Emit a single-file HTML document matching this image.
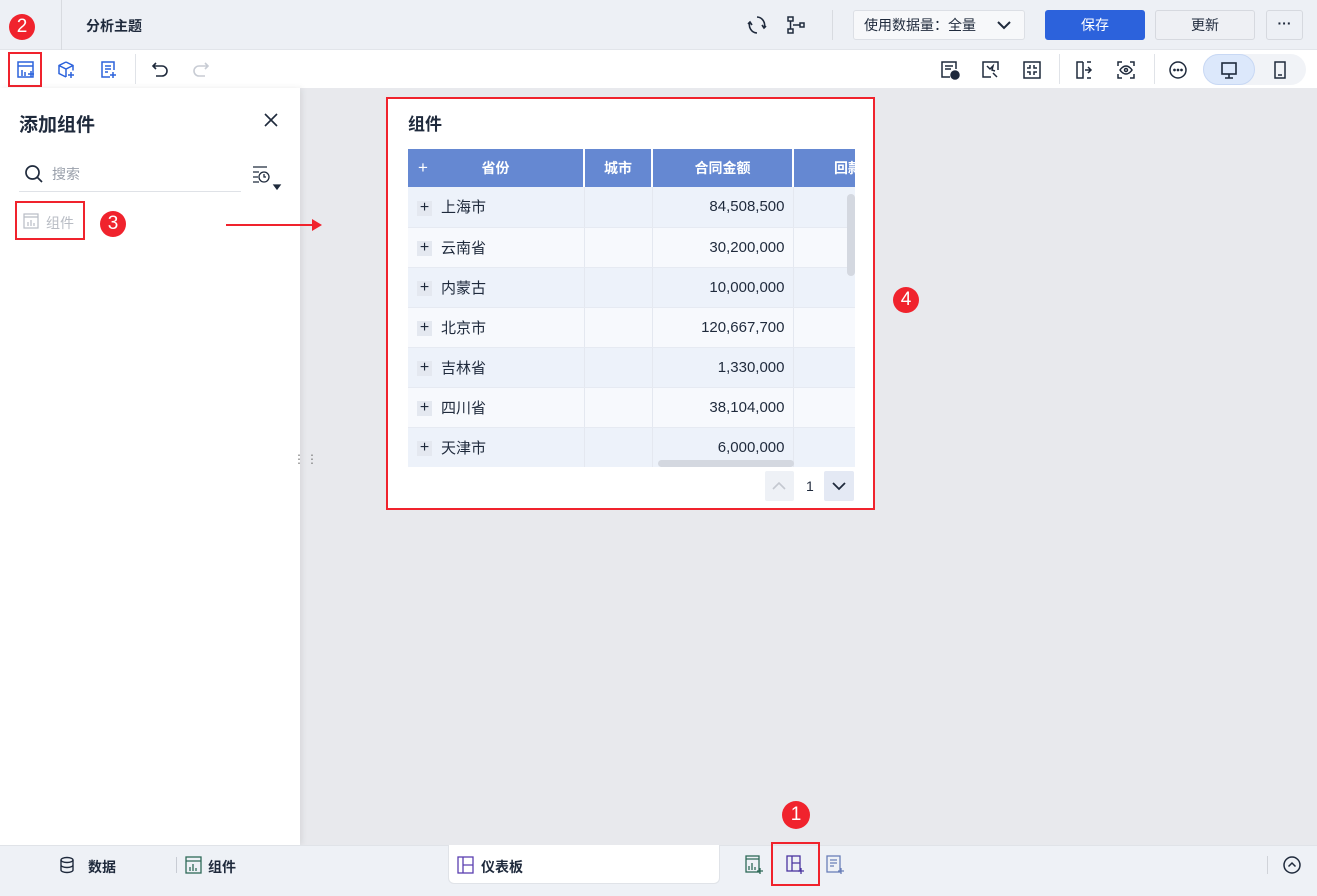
<!DOCTYPE html>
<html><head><meta charset="utf-8"><style>
*{box-sizing:border-box;margin:0;padding:0}
body{width:1317px;height:896px;overflow:hidden;background:#fff;font-family:"Liberation Sans","Noto Sans CJK SC",sans-serif;color:#1f2a3c;position:relative}
.abs{position:absolute}
.top{left:0;top:0;width:1317px;height:50px;background:#edf0f5;border-bottom:1px solid #e2e5ea}
.tb{left:0;top:50px;width:1317px;height:38px;background:#fff}
.canvas{left:300px;top:88px;width:1017px;height:757px;background:#e8e9ed}
.left{left:0;top:88px;width:300px;height:757px;background:#fff;box-shadow:2px 0 6px rgba(0,0,0,.08)}
.bottom{left:0;top:845px;width:1317px;height:51px;background:#eef1f6;border-top:1px solid #e0e3e8}
.badge{width:26px;height:26px;border-radius:50%;background:#f0232d;color:#fff;font-size:19px;text-align:center;line-height:26px}
.red{border:2px solid #f0232d}
.btn{font-size:14px;text-align:center;border-radius:3px}
table{border-collapse:collapse;font-size:15px}
td{height:40px;border-right:1px solid #e4e8f0;border-bottom:1px solid #e6eaf2}
th{height:38px;background:#6588d2;color:#fff;font-size:14px;border-right:2px solid #fff}
.pl{display:inline-block;width:15px;height:15px;background:#e4e8f0;line-height:14px;text-align:center;font-size:16px;margin:0 9px 0 9px;vertical-align:middle}
</style></head><body>
<div class="abs top"></div>
<div class="abs" style="left:61px;top:0;width:1px;height:50px;background:#d8dbe0"></div>
<div class="abs" style="left:86px;top:16px;font-size:14px;font-weight:bold">分析主题</div>
<svg class="abs" style="left:747px;top:15px" width="20" height="20" viewBox="0 0 20 20" fill="none" stroke="#1f2a3c" stroke-width="1.6"><path d="M10 2a8 8 0 0 1 7 11M10 18a8 8 0 0 1-7-11"/><path d="M15 10l2 3 2-2M5 10l-2-3-2 2"/></svg>
<svg class="abs" style="left:786px;top:15px" width="20" height="20" viewBox="0 0 20 20" fill="none" stroke="#1f2a3c" stroke-width="1.5"><rect x="2" y="2" width="5" height="4"/><rect x="2" y="14" width="5" height="4"/><rect x="14" y="8" width="4" height="4"/><path d="M4.5 6v8M7 10h7"/></svg>
<div class="abs" style="left:832px;top:10px;width:1px;height:30px;background:#d8dbe0"></div>
<div class="abs btn" style="left:853px;top:10px;width:172px;height:30px;background:#f7f8fa;border:1px solid #dcdfe5;line-height:28px;text-align:left;padding-left:10px;color:#1f2a3c">使用数据量：全量<svg style="position:absolute;right:12px;top:8px" width="16" height="12" viewBox="0 0 16 12"><path d="M2 3l6 6 6-6" fill="none" stroke="#1f2a3c" stroke-width="2"/></svg></div>
<div class="abs btn" style="left:1045px;top:10px;width:100px;height:30px;background:#2c62dc;color:#fff;line-height:30px">保存</div>
<div class="abs btn" style="left:1155px;top:10px;width:100px;height:30px;background:#eef0f4;border:1px solid #d6d9df;line-height:28px">更新</div>
<div class="abs btn" style="left:1266px;top:10px;width:37px;height:30px;border:1px solid #d6d9df;line-height:24px;font-weight:bold">···</div>

<div class="abs tb"></div>
<div class="abs red" style="left:8px;top:52px;width:34px;height:35px"></div>
<svg class="abs" style="left:17px;top:61px" width="18" height="18" viewBox="0 0 18 18" fill="none" stroke="#2c62dc" stroke-width="1.5"><rect x="1" y="1" width="15" height="15"/><path d="M1 5h15M5 9v6M8 11v4M11 13h6M14 10v6"/></svg>
<svg class="abs" style="left:58px;top:61px" width="18" height="18" viewBox="0 0 18 18" fill="none" stroke="#2c62dc" stroke-width="1.5"><path d="M8 1l7 3.5v5M8 1L1 4.5v8L8 16M1 4.5L8 8l7-3.5M8 8v8"/><path d="M13 11v6M10 14h6"/></svg>
<svg class="abs" style="left:100px;top:61px" width="18" height="18" viewBox="0 0 18 18" fill="none" stroke="#2c62dc" stroke-width="1.5"><path d="M10 16H2V1h12v8M5 5h6M5 8h6M5 11h3M13 11v6M10 14h6"/></svg>
<div class="abs" style="left:135px;top:54px;width:1px;height:30px;background:#e0e3e8"></div>
<svg class="abs" style="left:151px;top:61px" width="18" height="18" viewBox="0 0 18 18" fill="none" stroke="#1f2a3c" stroke-width="1.6"><path d="M5 2L2 5l3 3M2 5h9a5 5 0 0 1 0 10H5"/></svg>
<svg class="abs" style="left:192px;top:61px" width="18" height="18" viewBox="0 0 18 18" fill="none" stroke="#c8ccd4" stroke-width="1.6"><path d="M13 2l3 3-3 3M16 5H7a5 5 0 0 0 0 10h6"/></svg>
<svg class="abs" style="left:940px;top:60px" width="20" height="20" viewBox="0 0 20 20" fill="none" stroke="#1f2a3c" stroke-width="1.5"><path d="M10 17H2V2h14v7M5 6h8M5 9h6"/><circle cx="15" cy="15" r="4" fill="#1f2a3c"/></svg>
<svg class="abs" style="left:981px;top:60px" width="20" height="20" viewBox="0 0 20 20" fill="none" stroke="#1f2a3c" stroke-width="1.5"><path d="M10 17H2V2h15v8"/><path d="M6 6l3 3 3-3-1 4 3 1M12 13l4 4"/></svg>
<svg class="abs" style="left:1022px;top:60px" width="20" height="20" viewBox="0 0 20 20" fill="none" stroke="#1f2a3c" stroke-width="1.5"><rect x="2" y="2" width="16" height="16"/><path d="M8 5v3H5M12 5v3h3M8 15v-3H5M12 15v-3h3"/></svg>
<div class="abs" style="left:1059px;top:54px;width:1px;height:30px;background:#e0e3e8"></div>
<svg class="abs" style="left:1075px;top:60px" width="20" height="20" viewBox="0 0 20 20" fill="none" stroke="#1f2a3c" stroke-width="1.5"><path d="M8 2H2v16h6V2M12 2h4M12 18h4M13 7l3 3-3 3M10 10h6"/></svg>
<svg class="abs" style="left:1116px;top:60px" width="20" height="20" viewBox="0 0 20 20" fill="none" stroke="#1f2a3c" stroke-width="1.5"><path d="M2 6V2h4M14 2h4v4M2 14v4h4M18 14v4h-4"/><path d="M4 10s2.5-4 6-4 6 4 6 4-2.5 4-6 4-6-4-6-4z"/><circle cx="10" cy="10" r="1.5"/></svg>
<div class="abs" style="left:1154px;top:54px;width:1px;height:30px;background:#e0e3e8"></div>
<svg class="abs" style="left:1168px;top:60px" width="20" height="20" viewBox="0 0 20 20" fill="none" stroke="#1f2a3c" stroke-width="1.5"><circle cx="10" cy="10" r="8"/><circle cx="6.5" cy="10" r=".6" fill="#1f2a3c"/><circle cx="10" cy="10" r=".6" fill="#1f2a3c"/><circle cx="13.5" cy="10" r=".6" fill="#1f2a3c"/></svg>
<div class="abs" style="left:1203px;top:54px;width:103px;height:31px;border-radius:16px;background:#f1f3f7"></div>
<div class="abs" style="left:1203px;top:54px;width:52px;height:31px;border-radius:16px;background:#dce8fb;border:1px solid #c8d8f4"></div>
<svg class="abs" style="left:1219px;top:60px" width="20" height="20" viewBox="0 0 20 20" fill="none" stroke="#1f2a3c" stroke-width="1.6"><rect x="3" y="3" width="14" height="11"/><path d="M10 14v4M6 18h8"/></svg>
<svg class="abs" style="left:1270px;top:60px" width="20" height="20" viewBox="0 0 20 20" fill="none" stroke="#1f2a3c" stroke-width="1.5"><rect x="5" y="2" width="10" height="16"/><path d="M8 15h4"/></svg>

<div class="abs canvas"></div>
<div class="abs left"></div>
<div class="abs badge" style="left:9px;top:14px">2</div>
<div class="abs" style="left:19px;top:110px;font-size:19px;font-weight:bold">添加组件</div>
<svg class="abs" style="left:263px;top:112px" width="16" height="16" viewBox="0 0 16 16" stroke="#1f2a3c" stroke-width="1.6"><path d="M2 2l12 12M14 2L2 14"/></svg>
<svg class="abs" style="left:24px;top:164px" width="20" height="20" viewBox="0 0 20 20" fill="none" stroke="#1f2a3c" stroke-width="1.7"><circle cx="8.5" cy="8.5" r="6.5"/><path d="M13 13l5 5"/></svg>
<div class="abs" style="left:52px;top:164px;font-size:14px;color:#9aa0ab">搜索</div>
<div class="abs" style="left:19px;top:191px;width:222px;height:1px;background:#dfe2e7"></div>
<svg class="abs" style="left:252px;top:164px" width="30" height="28" viewBox="0 0 30 28" fill="none" stroke="#1f2a3c" stroke-width="1.3"><path d="M1 3h14M1 8h6M1 13h5M1 18h6"/><circle cx="12" cy="13" r="5"/><path d="M12 10v3h2"/><path d="M22 21l3 4 3-4z" fill="#1f2a3c"/></svg>
<div class="abs red" style="left:15px;top:201px;width:70px;height:39px"></div>
<svg class="abs" style="left:23px;top:213px" width="16" height="16" viewBox="0 0 16 16" fill="none" stroke="#b8bcc4" stroke-width="1.2"><rect x="1" y="1" width="14" height="14"/><path d="M1 4h14M5 13V9M8 13V7M11 13v-3"/></svg>
<div class="abs" style="left:46px;top:213px;font-size:14px;color:#b8bcc4">组件</div>
<div class="abs badge" style="left:100px;top:211px">3</div>
<div class="abs" style="left:226px;top:224px;width:88px;height:2px;background:#f0232d"></div>
<svg class="abs" style="left:312px;top:219px" width="10" height="12"><path d="M0 0l10 6-10 6z" fill="#f0232d"/></svg>
<div class="abs" style="left:293px;top:456px;font-size:12px;color:#777;line-height:6px;letter-spacing:1px">⋮⋮</div>

<div class="abs red" style="left:386px;top:97px;width:489px;height:413px;background:#fff"></div>
<div class="abs" style="left:408px;top:110px;font-size:17px;font-weight:bold">组件</div>
<div class="abs" style="left:408px;top:149px;width:447px;height:318px;overflow:hidden">
<table style="width:520px">
<tr><th style="width:176px;position:relative"><span style="position:absolute;left:10px;top:9px;font-size:17px;font-weight:normal">+</span>省份</th><th style="width:68px">城市</th><th style="width:141px">合同金额</th><th style="text-align:left;padding-left:40px">回款</th></tr>
<tr style="background:#edf2fa"><td><span class="pl">+</span>上海市</td><td></td><td style="text-align:right;padding-right:8px">84,508,500</td><td></td></tr>
<tr style="background:#f7f9fd"><td><span class="pl">+</span>云南省</td><td></td><td style="text-align:right;padding-right:8px">30,200,000</td><td></td></tr>
<tr style="background:#edf2fa"><td><span class="pl">+</span>内蒙古</td><td></td><td style="text-align:right;padding-right:8px">10,000,000</td><td></td></tr>
<tr style="background:#f7f9fd"><td><span class="pl">+</span>北京市</td><td></td><td style="text-align:right;padding-right:8px">120,667,700</td><td></td></tr>
<tr style="background:#edf2fa"><td><span class="pl">+</span>吉林省</td><td></td><td style="text-align:right;padding-right:8px">1,330,000</td><td></td></tr>
<tr style="background:#f7f9fd"><td><span class="pl">+</span>四川省</td><td></td><td style="text-align:right;padding-right:8px">38,104,000</td><td></td></tr>
<tr style="background:#edf2fa"><td><span class="pl">+</span>天津市</td><td></td><td style="text-align:right;padding-right:8px">6,000,000</td><td></td></tr>
</table></div>
<div class="abs" style="left:847px;top:194px;width:8px;height:82px;border-radius:4px;background:#d4d8e0"></div>
<div class="abs" style="left:658px;top:460px;width:136px;height:7px;border-radius:4px;background:#d4d8e0"></div>
<div class="abs" style="left:765px;top:471px;width:29px;height:30px;background:#eef1f6;border-radius:2px"></div>
<svg class="abs" style="left:771px;top:478px" width="16" height="16"><path d="M2 11l6-6 6 6" fill="none" stroke="#c4c8d0" stroke-width="1.6"/></svg>
<div class="abs" style="left:806px;top:478px;font-size:14px">1</div>
<div class="abs" style="left:824px;top:471px;width:30px;height:30px;background:#e4e9f4;border-radius:2px"></div>
<svg class="abs" style="left:831px;top:478px" width="16" height="16"><path d="M2 5l6 6 6-6" fill="none" stroke="#1f2a3c" stroke-width="1.8"/></svg>
<div class="abs badge" style="left:893px;top:287px">4</div>

<div class="abs bottom"></div>
<svg class="abs" style="left:59px;top:856px" width="16" height="18" viewBox="0 0 16 18" fill="none" stroke="#1f2a3c" stroke-width="1.4"><ellipse cx="8" cy="4" rx="6" ry="2.5"/><path d="M2 4v10c0 1.4 2.7 2.5 6 2.5s6-1.1 6-2.5V4M2 9c0 1.4 2.7 2.5 6 2.5s6-1.1 6-2.5"/></svg>
<div class="abs" style="left:88px;top:857px;font-size:14px;font-weight:bold">数据</div>
<div class="abs" style="left:176px;top:857px;width:1px;height:16px;background:#c8ccd4"></div>
<svg class="abs" style="left:185px;top:856px" width="18" height="18" viewBox="0 0 18 18" fill="none" stroke="#2e6a58" stroke-width="1.3"><rect x="1" y="1" width="15" height="16"/><path d="M1 5h15M5 15v-4M8 15V8M11 15v-3"/></svg>
<div class="abs" style="left:208px;top:857px;font-size:14px;font-weight:bold">组件</div>
<div class="abs" style="left:448px;top:845px;width:272px;height:39px;background:#fff;border-radius:0 0 6px 6px;border:1px solid #e0e3e8;border-top:none"></div>
<svg class="abs" style="left:457px;top:856px" width="18" height="18" viewBox="0 0 18 18" fill="none" stroke="#5b3fb0" stroke-width="1.3"><rect x="1" y="1" width="15" height="16"/><path d="M6 1v16M6 9h10"/></svg>
<div class="abs" style="left:481px;top:857px;font-size:14px;font-weight:bold">仪表板</div>
<svg class="abs" style="left:745px;top:855px" width="20" height="20" viewBox="0 0 20 20" fill="none" stroke="#2e6a58" stroke-width="1.3"><rect x="1" y="1" width="13" height="16"/><path d="M1 4h13M4 15v-4M7 15V8M10 15v-3M15 13v6M12 16h6"/></svg>
<div class="abs red" style="left:771px;top:842px;width:49px;height:44px"></div>
<svg class="abs" style="left:786px;top:855px" width="20" height="20" viewBox="0 0 20 20" fill="none" stroke="#4a35a0" stroke-width="1.3"><rect x="1" y="1" width="13" height="15"/><path d="M6 1v15M6 8h8M15 13v6M12 16h6"/></svg>
<svg class="abs" style="left:826px;top:855px" width="20" height="20" viewBox="0 0 20 20" fill="none" stroke="#6a7fb8" stroke-width="1.3"><rect x="1" y="1" width="13" height="16"/><path d="M4 5h7M4 8h7M4 11h4M15 13v6M12 16h6"/></svg>
<div class="abs badge" style="left:782px;top:801px;width:28px;height:28px;line-height:28px">1</div>
<div class="abs" style="left:1267px;top:856px;width:1px;height:18px;background:#d0d3d9"></div>
<svg class="abs" style="left:1283px;top:856px" width="18" height="18" viewBox="0 0 18 18" fill="none" stroke="#1f2a3c" stroke-width="1.5"><circle cx="9" cy="9" r="8"/><path d="M5.5 10.5L9 7l3.5 3.5"/></svg>
</body></html>
